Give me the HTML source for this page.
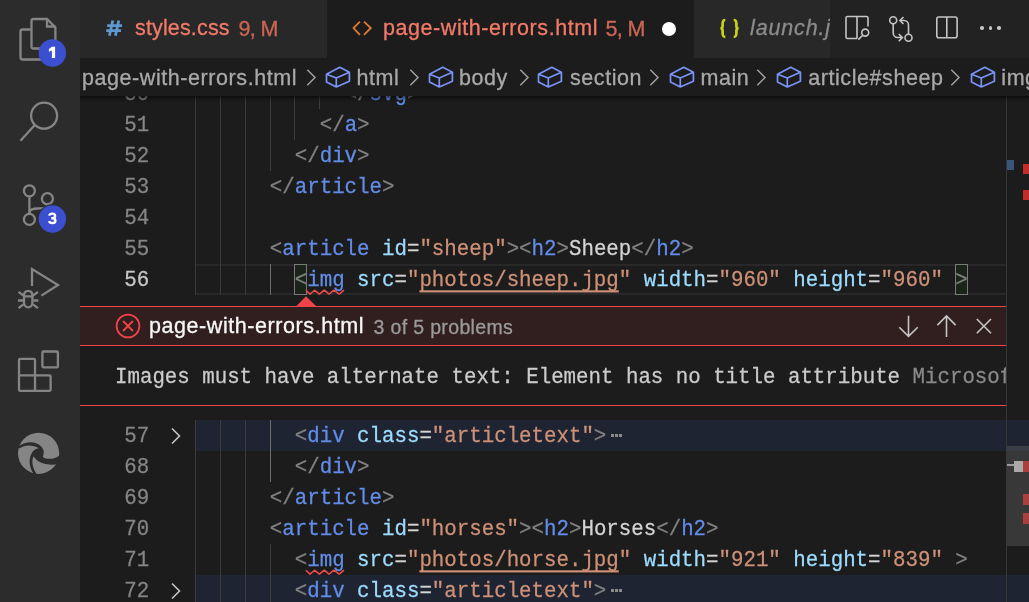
<!DOCTYPE html>
<html><head><meta charset="utf-8"><title>VS Code</title>
<style>
*{margin:0;padding:0;box-sizing:border-box}
html,body{width:1029px;height:602px;overflow:hidden;background:#1c1c1c}
#root{position:absolute;left:0;top:0;width:1029px;height:602px;will-change:transform}
body{position:relative;font-family:"Liberation Sans",sans-serif}
.abs{position:absolute}
.row{position:absolute;height:31px;line-height:31px;padding-top:1px;transform:scaleY(1.07);-webkit-text-stroke:0.25px currentColor;transform-origin:0 22px;font-family:"Liberation Mono",monospace;font-size:20.783px;white-space:pre}
.ln{left:79.2px;width:70px;text-align:right}
.t{color:#808080}.n{color:#628de8}.a{color:#9cdcfe}.s{color:#ce9178}.x{color:#d4d4d4}
.u{text-decoration:underline;text-underline-offset:4px;text-decoration-skip-ink:none;text-decoration-thickness:1.5px}
.ell{color:#8a8a8a}
.bm{}
.ui{position:absolute;font-size:21.5px;line-height:24px;white-space:pre;letter-spacing:0.57px;-webkit-text-stroke:0.3px currentColor}
</style></head><body><div id="root">
<div class="abs" style="left:80px;top:96px;width:949px;height:506px;background:#1c1c1c"></div>
<div class="abs" style="left:195px;top:264px;width:811px;height:31px;border-top:2px solid #282828;border-bottom:2px solid #282828"></div>
<div class="abs" style="left:294.3px;top:264px;width:12.5px;height:31px;border:1px solid #7a7a7a;background:#1a2418"></div>
<div class="abs" style="left:955.2px;top:264px;width:12.5px;height:31px;border:1px solid #7a7a7a;background:#1a2418"></div>
<div class="abs" style="left:195px;top:420px;width:834px;height:31px;background:#1f2432"></div>
<div class="abs" style="left:195px;top:575px;width:834px;height:31px;background:#1f2432"></div>
<div class="abs" style="left:195px;top:96px;width:1px;height:199px;background:#3c3c3c"></div>
<div class="abs" style="left:195px;top:420px;width:1px;height:182px;background:#3c3c3c"></div>
<div class="abs" style="left:220px;top:96px;width:1px;height:199px;background:#3c3c3c"></div>
<div class="abs" style="left:220px;top:420px;width:1px;height:182px;background:#3c3c3c"></div>
<div class="abs" style="left:245px;top:96px;width:1px;height:199px;background:#3c3c3c"></div>
<div class="abs" style="left:245px;top:420px;width:1px;height:182px;background:#3c3c3c"></div>
<div class="abs" style="left:270px;top:96px;width:1px;height:75px;background:#3c3c3c"></div>
<div class="abs" style="left:270px;top:264px;width:1px;height:31px;background:#6e6e6e"></div>
<div class="abs" style="left:294px;top:96px;width:1px;height:44px;background:#3c3c3c"></div>
<div class="abs" style="left:319px;top:96px;width:1px;height:13px;background:#3c3c3c"></div>
<div class="abs" style="left:270px;top:420px;width:1px;height:62px;background:#6e6e6e"></div>
<div class="abs" style="left:270px;top:544px;width:1px;height:58px;background:#3c3c3c"></div>
<div class="row ln" style="top:78px;color:#858585">50</div>
<div class="row code" style="top:78px;left:344.64px"><span class="t">&lt;/</span><span class="n">svg</span><span class="t">&gt;</span></div>
<div class="row ln" style="top:109px;color:#858585">51</div>
<div class="row code" style="top:109px;left:319.70px"><span class="t">&lt;/</span><span class="n">a</span><span class="t">&gt;</span></div>
<div class="row ln" style="top:140px;color:#858585">52</div>
<div class="row code" style="top:140px;left:294.76px"><span class="t">&lt;/</span><span class="n">div</span><span class="t">&gt;</span></div>
<div class="row ln" style="top:171px;color:#858585">53</div>
<div class="row code" style="top:171px;left:269.82px"><span class="t">&lt;/</span><span class="n">article</span><span class="t">&gt;</span></div>
<div class="row ln" style="top:202px;color:#858585">54</div>
<div class="row ln" style="top:233px;color:#858585">55</div>
<div class="row code" style="top:233px;left:269.82px"><span class="t">&lt;</span><span class="n">article</span> <span class="a">id</span><span class="x">=</span><span class="s">"sheep"</span><span class="t">&gt;&lt;</span><span class="n">h2</span><span class="t">&gt;</span><span class="x">Sheep</span><span class="t">&lt;/</span><span class="n">h2</span><span class="t">&gt;</span></div>
<div class="row ln" style="top:264px;color:#c6c6c6">56</div>
<div class="row code" style="top:264px;left:294.76px"><span class="t bm">&lt;</span><span class="n">img</span> <span class="a">src</span><span class="x">=</span><span class="s">"<span class="u">photos/sheep.jpg</span>"</span> <span class="a">width</span><span class="x">=</span><span class="s">"960"</span> <span class="a">height</span><span class="x">=</span><span class="s">"960"</span> <span class="t bm">&gt;</span></div>
<div class="row ln" style="top:420px;color:#858585">57</div>
<div class="row code" style="top:420px;left:294.76px"><span class="t">&lt;</span><span class="n">div</span> <span class="a">class</span><span class="x">=</span><span class="s">"articletext"</span><span class="t">&gt;</span></div>
<div class="abs" style="left:610.6px;top:434px;width:3.2px;height:3.2px;background:#8a8a8a"></div>
<div class="abs" style="left:614.7px;top:434px;width:3.2px;height:3.2px;background:#8a8a8a"></div>
<div class="abs" style="left:618.8px;top:434px;width:3.2px;height:3.2px;background:#8a8a8a"></div>
<svg class="abs" style="left:168px;top:426px" width="16" height="20" viewBox="0 0 16 20"><path d="M4 2.5 L11.5 10 L4 17.5" fill="none" stroke="#c5c5c5" stroke-width="1.6"/></svg>
<div class="row ln" style="top:451px;color:#858585">68</div>
<div class="row code" style="top:451px;left:294.76px"><span class="t">&lt;/</span><span class="n">div</span><span class="t">&gt;</span></div>
<div class="row ln" style="top:482px;color:#858585">69</div>
<div class="row code" style="top:482px;left:269.82px"><span class="t">&lt;/</span><span class="n">article</span><span class="t">&gt;</span></div>
<div class="row ln" style="top:513px;color:#858585">70</div>
<div class="row code" style="top:513px;left:269.82px"><span class="t">&lt;</span><span class="n">article</span> <span class="a">id</span><span class="x">=</span><span class="s">"horses"</span><span class="t">&gt;&lt;</span><span class="n">h2</span><span class="t">&gt;</span><span class="x">Horses</span><span class="t">&lt;/</span><span class="n">h2</span><span class="t">&gt;</span></div>
<div class="row ln" style="top:544px;color:#858585">71</div>
<div class="row code" style="top:544px;left:294.76px"><span class="t">&lt;</span><span class="n">img</span> <span class="a">src</span><span class="x">=</span><span class="s">"<span class="u">photos/horse.jpg</span>"</span> <span class="a">width</span><span class="x">=</span><span class="s">"921"</span> <span class="a">height</span><span class="x">=</span><span class="s">"839"</span> <span class="t">&gt;</span></div>
<div class="row ln" style="top:575px;color:#858585">72</div>
<div class="row code" style="top:575px;left:294.76px"><span class="t">&lt;</span><span class="n">div</span> <span class="a">class</span><span class="x">=</span><span class="s">"articletext"</span><span class="t">&gt;</span></div>
<div class="abs" style="left:610.6px;top:589px;width:3.2px;height:3.2px;background:#8a8a8a"></div>
<div class="abs" style="left:614.7px;top:589px;width:3.2px;height:3.2px;background:#8a8a8a"></div>
<div class="abs" style="left:618.8px;top:589px;width:3.2px;height:3.2px;background:#8a8a8a"></div>
<svg class="abs" style="left:168px;top:581px" width="16" height="20" viewBox="0 0 16 20"><path d="M4 2.5 L11.5 10 L4 17.5" fill="none" stroke="#c5c5c5" stroke-width="1.6"/></svg>
<svg class="abs" style="left:0;top:0;overflow:visible" width="1" height="1"><path d="M305.8 290.3 L310.0 294.1 L314.6 290.2 L319.4 294.1 L324.3 290.2 L329.1 294.1 L334.0 290.2 L339.2 294.1 L344.0 290.2" fill="none" stroke="#f14c4c" stroke-width="1.5" stroke-linejoin="round"/></svg><svg class="abs" style="left:0;top:0;overflow:visible" width="1" height="1"><path d="M305.8 570.3 L310.0 574.1 L314.6 570.2 L319.4 574.1 L324.3 570.2 L329.1 574.1 L334.0 570.2 L339.2 574.1 L344.0 570.2" fill="none" stroke="#f14c4c" stroke-width="1.5" stroke-linejoin="round"/></svg>

<svg class="abs" style="left:295px;top:295px" width="22" height="12" viewBox="295 295 22 12"><path d="M296 306.5 L306 296.3 L316.5 306.5 Z" fill="#f0434a"/></svg>
<div class="abs" style="left:80px;top:306px;width:926px;height:1px;background:#f0434a"></div>
<div class="abs" style="left:80px;top:307px;width:926px;height:38px;background:#311f20"></div>
<div class="abs" style="left:80px;top:345px;width:926px;height:1px;background:#f0434a"></div>
<div class="abs" style="left:80px;top:346px;width:926px;height:59px;background:#1c1c1c"></div>
<div class="abs" style="left:80px;top:405px;width:926px;height:1px;background:#f0434a"></div>
<svg class="abs" style="left:110px;top:308px" width="36" height="36" viewBox="110 308 36 36" fill="none" stroke="#f0434a" stroke-width="1.8">
 <circle cx="128" cy="326" r="11.4"/><path d="M123 321 L133 331 M133 321 L123 331"/>
</svg>
<div class="ui" style="left:149px;top:314.3px;color:#f8f8f8">page-with-errors.html</div>
<div class="ui" style="left:373.5px;top:315.2px;color:#9a9a9a;font-size:19.5px;letter-spacing:0.35px">3 of 5 problems</div>
<svg class="abs" style="left:890px;top:310px" width="110" height="34" viewBox="890 310 110 34" fill="none" stroke="#c5c5c5" stroke-width="1.6">
 <path d="M908.5 315.8 V336.3 M899.3 327.2 L908.5 336.3 L917.7 327.2"/>
 <path d="M946.5 337 V316 M937.4 325.1 L946.5 316 L955.6 325.1"/>
 <path d="M976.8 319 L991 333.3 M991 319 L976.8 333.3"/>
</svg>
<div class="abs" style="left:80px;top:346px;width:926px;height:59px;overflow:hidden"><div class="row" style="left:35px;top:15px;color:#cccccc">Images must have alternate text: Element has no title attribute <span style="color:#8a8a8a">Microsoft Edge Tools</span></div></div>


<div class="abs" style="left:1006px;top:96px;width:1px;height:506px;background:#363636"></div>
<div class="abs" style="left:1007px;top:160px;width:7px;height:10px;background:#3a5578"></div>
<div class="abs" style="left:1023px;top:164px;width:6px;height:10px;background:#c42b2b"></div>
<div class="abs" style="left:1023px;top:190px;width:6px;height:10px;background:#c42b2b"></div>
<div class="abs" style="left:1007px;top:446px;width:22px;height:100px;background:rgba(121,121,121,0.3)"></div>
<div class="abs" style="left:1007px;top:463.5px;width:7px;height:2px;background:#9a9a9a"></div>
<div class="abs" style="left:1014px;top:461px;width:9px;height:10.5px;background:#a9a9a9"></div>
<div class="abs" style="left:1023px;top:461px;width:6px;height:10.5px;background:#a94040"></div>
<div class="abs" style="left:1023px;top:494px;width:6px;height:10.5px;background:#a94040"></div>
<div class="abs" style="left:1023px;top:513px;width:6px;height:10.5px;background:#a94040"></div>

<div class="abs" style="left:80px;top:96px;width:949px;height:7px;background:linear-gradient(rgba(0,0,0,0.55),rgba(0,0,0,0.18) 45%,rgba(0,0,0,0))"></div>

<div class="abs" style="left:80px;top:58px;width:949px;height:38px;background:#1c1c1c;z-index:3;overflow:hidden">
<div style="position:absolute;left:-80px;top:-58px;width:1029px;height:96px">
<div class="ui" style="left:82px;top:65.5px;color:#a9a9a9">page-with-errors.html</div>
<svg class="abs" style="left:306px;top:68px" width="12" height="20" viewBox="0 0 12 20"><path d="M1.3 1.8 L9 9.5 L1.3 17.2" fill="none" stroke="#a0a0a0" stroke-width="1.5"/></svg><svg class="abs" style="left:325px;top:66px" width="26" height="23" viewBox="-1.5 -1.3 26 23"><path d="M13.3 0 L22.9 4.9 V13.9 L9.8 19.7 L0 14.8 V6.9 Z M0 6.9 L9.8 10.7 L22.9 4.9 M9.8 10.7 V19.7" fill="none" stroke="#7a93f7" stroke-width="1.7" stroke-linejoin="round"/></svg>
<div class="ui" style="left:356.5px;top:65.5px;color:#a9a9a9">html</div>
<svg class="abs" style="left:409px;top:68px" width="12" height="20" viewBox="0 0 12 20"><path d="M1.3 1.8 L9 9.5 L1.3 17.2" fill="none" stroke="#a0a0a0" stroke-width="1.5"/></svg><svg class="abs" style="left:428px;top:66px" width="26" height="23" viewBox="-1.5 -1.3 26 23"><path d="M13.3 0 L22.9 4.9 V13.9 L9.8 19.7 L0 14.8 V6.9 Z M0 6.9 L9.8 10.7 L22.9 4.9 M9.8 10.7 V19.7" fill="none" stroke="#7a93f7" stroke-width="1.7" stroke-linejoin="round"/></svg>
<div class="ui" style="left:459px;top:65.5px;color:#a9a9a9">body</div>
<svg class="abs" style="left:519px;top:68px" width="12" height="20" viewBox="0 0 12 20"><path d="M1.3 1.8 L9 9.5 L1.3 17.2" fill="none" stroke="#a0a0a0" stroke-width="1.5"/></svg><svg class="abs" style="left:537px;top:66px" width="26" height="23" viewBox="-1.5 -1.3 26 23"><path d="M13.3 0 L22.9 4.9 V13.9 L9.8 19.7 L0 14.8 V6.9 Z M0 6.9 L9.8 10.7 L22.9 4.9 M9.8 10.7 V19.7" fill="none" stroke="#7a93f7" stroke-width="1.7" stroke-linejoin="round"/></svg>
<div class="ui" style="left:570px;top:65.5px;color:#a9a9a9">section</div>
<svg class="abs" style="left:649px;top:68px" width="12" height="20" viewBox="0 0 12 20"><path d="M1.3 1.8 L9 9.5 L1.3 17.2" fill="none" stroke="#a0a0a0" stroke-width="1.5"/></svg><svg class="abs" style="left:669px;top:66px" width="26" height="23" viewBox="-1.5 -1.3 26 23"><path d="M13.3 0 L22.9 4.9 V13.9 L9.8 19.7 L0 14.8 V6.9 Z M0 6.9 L9.8 10.7 L22.9 4.9 M9.8 10.7 V19.7" fill="none" stroke="#7a93f7" stroke-width="1.7" stroke-linejoin="round"/></svg>
<div class="ui" style="left:700.5px;top:65.5px;color:#a9a9a9">main</div>
<svg class="abs" style="left:756px;top:68px" width="12" height="20" viewBox="0 0 12 20"><path d="M1.3 1.8 L9 9.5 L1.3 17.2" fill="none" stroke="#a0a0a0" stroke-width="1.5"/></svg><svg class="abs" style="left:776px;top:66px" width="26" height="23" viewBox="-1.5 -1.3 26 23"><path d="M13.3 0 L22.9 4.9 V13.9 L9.8 19.7 L0 14.8 V6.9 Z M0 6.9 L9.8 10.7 L22.9 4.9 M9.8 10.7 V19.7" fill="none" stroke="#7a93f7" stroke-width="1.7" stroke-linejoin="round"/></svg>
<div class="ui" style="left:808.2px;top:65.5px;color:#a9a9a9">article#sheep</div>
<svg class="abs" style="left:950px;top:68px" width="12" height="20" viewBox="0 0 12 20"><path d="M1.3 1.8 L9 9.5 L1.3 17.2" fill="none" stroke="#a0a0a0" stroke-width="1.5"/></svg><svg class="abs" style="left:970px;top:66px" width="26" height="23" viewBox="-1.5 -1.3 26 23"><path d="M13.3 0 L22.9 4.9 V13.9 L9.8 19.7 L0 14.8 V6.9 Z M0 6.9 L9.8 10.7 L22.9 4.9 M9.8 10.7 V19.7" fill="none" stroke="#7a93f7" stroke-width="1.7" stroke-linejoin="round"/></svg>
<div class="ui" style="left:1001.3px;top:65.5px;color:#a9a9a9">img</div>
</div></div>


<div class="abs" style="left:80px;top:0;width:949px;height:58px;background:#222222"></div>
<div class="abs" style="left:80px;top:0;width:247px;height:58px;background:#282828"></div>
<div class="abs" style="left:327px;top:0;width:367px;height:58px;background:#1c1c1c"></div>
<div class="abs" style="left:694px;top:0;width:136px;height:58px;background:#282828;overflow:hidden">
  <svg class="abs" style="left:0;top:0" width="60" height="58" viewBox="694 0 60 58" fill="none" stroke="#c6d11c" stroke-width="2.7"><path d="M725.3 20 C722.6 20 722.6 21.5 722.6 23.8 V26.3 C722.6 27.8 721.8 28.4 720.4 28.4 C721.8 28.4 722.6 29 722.6 30.5 V33 C722.6 35.3 722.6 36.8 725.3 36.8"/><path d="M733.7 20 C736.4 20 736.4 21.5 736.4 23.8 V26.3 C736.4 27.8 737.2 28.4 738.6 28.4 C737.2 28.4 736.4 29 736.4 30.5 V33 C736.4 35.3 736.4 36.8 733.7 36.8"/></svg>
  <div class="ui" style="left:56px;top:16.4px;color:#8c8c8c;font-style:italic;letter-spacing:0.85px">launch.json</div>
</div>
<svg class="abs" style="left:100px;top:14px" width="28" height="28" viewBox="100 14 28 28" fill="none" stroke="#5f97d0" stroke-width="2.8"><path d="M112.8 20.5 L109.4 35.8 M118.8 20.5 L115.4 35.8 M107.2 25.7 H122 M106.2 30.6 H121"/></svg>
<div class="ui" style="left:135px;top:16.4px;color:#f27a68;letter-spacing:0.15px">styles.css</div>
<div class="ui" style="left:238.5px;top:17.2px;color:#cc6654;letter-spacing:-0.6px">9, M</div>
<svg class="abs" style="left:350px;top:18px" width="24" height="20" viewBox="350 18 24 20"><path d="M359.9 21.6 L353.5 28 L359.9 34.8 M364 21.6 L370.8 28 L364 34.8" fill="none" stroke="#e37933" stroke-width="1.8"/></svg>
<div class="ui" style="left:383px;top:16.4px;color:#f27a68">page-with-errors.html</div>
<div class="ui" style="left:605.5px;top:17.2px;color:#cc6654;letter-spacing:-0.6px">5, M</div>
<div class="abs" style="left:662px;top:21.5px;width:14px;height:14px;border-radius:50%;background:#ffffff"></div>
<svg class="abs" style="left:830px;top:0" width="199" height="58" viewBox="830 0 199 58" fill="none" stroke="#c5c5c5" stroke-width="1.6">
 <path d="M868 26.4 V18 a1.5 1.5 0 0 0 -1.5 -1.5 H847.5 a1.5 1.5 0 0 0 -1.5 1.5 V37 a1.5 1.5 0 0 0 1.5 1.5 H857 M857 16.5 V38.5"/>
 <circle cx="865.2" cy="32.6" r="3.5"/><path d="M862.7 35.2 L858.3 39.6"/>
 <circle cx="893.2" cy="20.3" r="3.5"/><circle cx="908.5" cy="37.8" r="3.5"/>
 <path d="M893.2 23.8 V33 a4.5 4.5 0 0 0 4.5 4.5 H902.3 M898.8 34 L902.4 37.6 L898.8 41.2"/>
 <path d="M908.5 34.3 V25 a4.5 4.5 0 0 0 -4.5 -4.5 H900 M903.5 17 L899.9 20.5 L903.5 24"/>
 <rect x="936.8" y="17" width="20.3" height="20.8" rx="2"/><path d="M946.8 17 V37.8"/>
</svg>
<div class="abs" style="left:980px;top:26.4px;width:3.6px;height:3.6px;border-radius:50%;background:#c5c5c5"></div>
<div class="abs" style="left:988.6px;top:26.4px;width:3.6px;height:3.6px;border-radius:50%;background:#c5c5c5"></div>
<div class="abs" style="left:997.4px;top:26.4px;width:3.6px;height:3.6px;border-radius:50%;background:#c5c5c5"></div>


<div class="abs" style="left:0;top:0;width:80px;height:602px;background:#2c2c2c"></div>
<svg class="abs" style="left:0;top:0" width="80" height="500" viewBox="0 0 80 500" fill="none" stroke="#858585" stroke-width="2.3">
 <!-- files -->
 <path d="M30.5 29.5 H22.5 a2 2 0 0 0 -2 2 V57.5 a2 2 0 0 0 2 2 H44"/>
 <path d="M31.5 21 a2 2 0 0 1 2 -2 H47 L55.4 27.4 V46.5 a2 2 0 0 1 -2 2 H33.5 a2 2 0 0 1 -2 -2 Z"/>
 <path d="M47 19 V26.5 H55.4"/>
 <!-- search -->
 <circle cx="44.1" cy="115.7" r="13"/>
 <path d="M34.6 125.3 L20.5 140.8"/>
 <!-- scm -->
 <circle cx="29.4" cy="190.8" r="5.5"/>
 <circle cx="47.4" cy="198.7" r="5.5"/>
 <circle cx="29.4" cy="219.4" r="5.5"/>
 <path d="M29.4 196.3 V213.9"/>
 <path d="M47.4 204.2 C47.4 208 44 208.5 38 208.5 C32 208.5 29.4 210 29.4 213"/>
 <!-- run debug -->
 <path d="M32 285.9 V269 L58 285 L41.4 295.6"/>
 <path d="M24 296 C24 292 26 290.9 28.2 290.9 C30.4 290.9 32.4 292 32.4 296 V302.5 C32.4 305.5 30.4 307.3 28.2 307.3 C26 307.3 24 305.5 24 302.5 Z"/>
 <path d="M23 296.4 H33.4 M18.5 291.8 L23.5 295.5 M38 291.8 L33 295.5 M18 300.5 H23 M33.4 300.5 H38.4 M18.5 308.2 L23.5 304.3 M38 308.2 L33 304.3"/>
 <!-- extensions -->
 <path d="M19 360 a1.2 1.2 0 0 1 1.2 -1.2 H33.8 a1.2 1.2 0 0 1 1.2 1.2 V375.3 H49.4 a1.2 1.2 0 0 1 1.2 1.2 V389.6 a1.2 1.2 0 0 1 -1.2 1.2 H20.2 a1.2 1.2 0 0 1 -1.2 -1.2 Z"/>
 <path d="M19 375.3 H35 M35 375.3 V390.8"/>
 <rect x="42.4" y="351.5" width="15.5" height="15.9" rx="1.2"/>
</svg>
<svg class="abs" style="left:0;top:420px" width="80" height="70" viewBox="0 420 80 70">
 <circle cx="38.6" cy="453.3" r="20.6" fill="#858585"/>
 <path fill="#2c2c2c" d="M18.6 446.3 C24 442 31 441.3 35.5 443 C40 444.8 43.6 448 43.7 451.5 C43.7 454 43.2 456 42.7 456.9 C45.5 459 51.5 460 57.6 456.7 L62 454 L62 469 L56.1 464.6 C51 465 43 464.3 38.9 461.5 C36.2 459.8 34.5 458 33.6 456.3 C31.8 459.5 31.5 466 36.3 473.6 L37 477 L32 477 L33.4 473.4 C28.4 466 28.7 457.5 32.3 452.2 C33.6 450.4 35.6 448.8 38.8 448.3 C33 444.6 25 444.4 19.3 448.5 Z"/>
</svg>
<svg class="abs" style="left:0;top:0" width="80" height="240" viewBox="0 0 80 240">
 <circle cx="52.4" cy="53.05" r="13.7" fill="#3d4fd1"/>
 <path d="M51.9 46.7 H55.1 V57.9 H51.9 V50.4 L48.9 51.8 V49 Z" fill="#fff"/>
 <circle cx="52.4" cy="219" r="14.7" fill="#2c2c2c"/><circle cx="52.4" cy="219" r="13.7" fill="#3d4fd1"/>
 <path d="M49.3 215.6 C49.6 214 50.8 213.6 52.3 213.6 C54.1 213.6 55.1 214.5 55.1 215.9 C55.1 217.3 54 218.2 52.2 218.2 H51.3 M52.2 218.2 C54.4 218.2 55.4 219.3 55.4 220.8 C55.4 222.4 54.1 223.1 52.3 223.1 C50.6 223.1 49.4 222.5 49.1 221" fill="none" stroke="#fff" stroke-width="2.4"/>
</svg>

</div></body></html>
